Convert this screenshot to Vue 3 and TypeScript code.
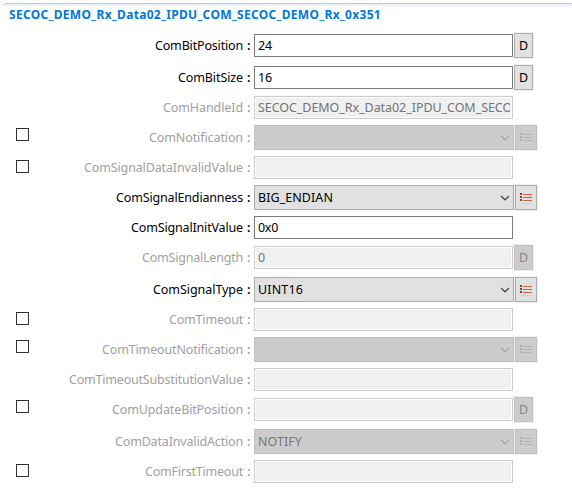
<script setup lang="ts">
type Kind = 'text' | 'combo'

interface Field {
  name: string
  labelWidth: number
  kind: Kind
  value?: string
  valueWidth?: number
  enabled?: boolean
  optional?: boolean
  resettable?: boolean
}

const title = 'SECOC_DEMO_Rx_Data02_IPDU_COM_SECOC_DEMO_Rx_0x351'

const fields: Field[] = [
  { name: 'ComBitPosition', labelWidth: 88, kind: 'text', value: '24', valueWidth: 14, enabled: true, resettable: true },
  { name: 'ComBitSize', labelWidth: 65, kind: 'text', value: '16', valueWidth: 14, enabled: true, resettable: true },
  { name: 'ComHandleId', labelWidth: 80, kind: 'text', value: 'SECOC_DEMO_Rx_Data02_IPDU_COM_SECOC', valueWidth: 262 },
  { name: 'ComNotification', labelWidth: 94, kind: 'combo', optional: true },
  { name: 'ComSignalDataInvalidValue', labelWidth: 159, kind: 'text', optional: true },
  { name: 'ComSignalEndianness', labelWidth: 127, kind: 'combo', value: 'BIG_ENDIAN', valueWidth: 75, enabled: true },
  { name: 'ComSignalInitValue', labelWidth: 112, kind: 'text', value: '0x0', valueWidth: 20, enabled: true },
  { name: 'ComSignalLength', labelWidth: 101, kind: 'text', value: '0', valueWidth: 7, resettable: true },
  { name: 'ComSignalType', labelWidth: 90, kind: 'combo', value: 'UINT16', valueWidth: 45, enabled: true },
  { name: 'ComTimeout', labelWidth: 74, kind: 'text', optional: true },
  { name: 'ComTimeoutNotification', labelWidth: 141, kind: 'combo', optional: true },
  { name: 'ComTimeoutSubstitutionValue', labelWidth: 174, kind: 'text' },
  { name: 'ComUpdateBitPosition', labelWidth: 131, kind: 'text', optional: true, resettable: true },
  { name: 'ComDataInvalidAction', labelWidth: 128, kind: 'combo', value: 'NOTIFY', valueWidth: 44 },
  { name: 'ComFirstTimeout', labelWidth: 98, kind: 'text', optional: true },
]

// Adjusts tracking so that a text run takes the given width in pixels.
const vFit = {
  mounted(el: HTMLElement, binding: { value?: number }) {
    const count = el.textContent?.length ?? 0
    if (!binding.value || !count) return
    const natural = el.getBoundingClientRect().width
    el.style.letterSpacing = `${(binding.value - natural) / count}px`
  },
}
</script>

<template>
  <section class="panel">
    <header class="heading">
      <h1 class="title"><span v-fit="372">{{ title }}</span></h1>
    </header>
    <div class="form">
      <div
        v-for="f in fields"
        :key="f.name"
        class="row"
        :class="{ tall: f.kind === 'combo' || f.resettable, off: !f.enabled }"
      >
        <div class="check-cell"><span v-if="f.optional" class="check"></span></div>
        <div class="label">
          <span v-fit="f.labelWidth">{{ f.name }}</span><span class="colon">:</span>
        </div>
        <div class="field" :class="f.kind">
          <div class="clip"><span v-if="f.value" v-fit="f.valueWidth" class="value">{{ f.value }}</span></div>
          <svg v-if="f.kind === 'combo'" class="chevron" width="10" height="6" viewBox="0 0 10 6">
            <path d="M1 1L5 4.8L9 1" />
          </svg>
        </div>
        <div v-if="f.kind === 'combo'" class="button list">
          <svg width="20" height="23" viewBox="0 0 20 23" shape-rendering="crispEdges">
            <path class="dots" d="M4 7h2v2h-2zM4 10h2v2h-2zM4 13h2v2h-2z" />
            <path class="lines" d="M7 8h9v1h-9zM7 11h9v1h-9zM7 14h9v1h-9z" />
            <path class="shade" d="M5 17h12v1h-12z" />
          </svg>
        </div>
        <div v-else-if="f.resettable" class="button reset">D</div>
      </div>
    </div>
  </section>
</template>

<style>
body {
  margin: 0;
  background: #fff;
}
</style>

<style scoped>
.panel {
  box-sizing: border-box;
  width: 572px;
  height: 488px;
  padding: 3px 0 0 3px;
  overflow: hidden;
  background: #fff;
  color: #000;
  font: 12.5px/20px 'Noto Sans', 'Open Sans', sans-serif;
  white-space: nowrap;
}
.heading {
  box-sizing: border-box;
  display: flex;
  align-items: flex-start;
  height: 29px;
  padding: 2px 0 0 5px;
  border-top: 1px solid #b5c7e5;
  border-top-left-radius: 4px;
  background: linear-gradient(#eaf0f8, #fff 5px);
}
.title {
  margin: 0;
  padding: 0 1px;
  background: #fff;
  color: #0078d7;
  font-size: 12px;
  font-weight: 700;
  line-height: 17px;
}
.title span {
  display: block;
}
.form {
  display: flex;
  flex-direction: column;
  gap: 5px;
}
.row {
  display: flex;
  align-items: center;
  height: 23px;
}
.tall {
  height: 27px;
}
.check-cell {
  box-sizing: border-box;
  align-self: flex-start;
  flex: none;
  width: 27px;
  padding: 4px 0 0 13px;
}
.check {
  display: block;
  box-sizing: border-box;
  width: 13px;
  height: 13px;
  border: 1px solid #333;
}
.label {
  display: flex;
  justify-content: flex-end;
  flex: none;
  width: 224px;
}
.colon {
  width: 3px;
  margin: 0 4px 0 4px;
  font-weight: 600;
}
.off .label {
  color: #a0a0a0;
}
.field {
  box-sizing: border-box;
  display: flex;
  align-items: center;
  flex: none;
  width: 259px;
  height: 23px;
  padding: 0 2px 0 3px;
  border: 1px solid #7a7a7a;
}
.clip {
  flex: 1;
  min-width: 0;
  height: 20px;
  overflow: hidden;
}
.value {
  display: inline-block;
}
.off .field {
  border-color: #ccc;
  background: #f0f0f0;
  box-shadow: inset 0 0 0 1px #fff;
  color: #737373;
}
.field.combo {
  width: 260px;
  height: 25px;
  padding-right: 3px;
  border-color: #adadad;
  background: #e1e1e1;
}
.off .field.combo {
  border-color: #bfbfbf;
  background: #ccc;
  box-shadow: none;
  color: #777;
}
.chevron {
  flex: none;
  fill: none;
  stroke: #444;
  stroke-width: 1.2;
}
.off .chevron {
  stroke: #a5a5a5;
}
.button {
  box-sizing: border-box;
  flex: none;
  height: 25px;
  margin-left: 1px;
  border: 1px solid #adadad;
  background: #e1e1e1;
  box-shadow: 0 0 0 1px #f0f0f0;
}
.off .button {
  border-color: #bfbfbf;
  background: #ccc;
  color: #838383;
}
.reset {
  width: 19px;
  line-height: 23px;
  text-align: center;
  clip-path: inset(-1px -1px -1px 0);
}
.list {
  width: 22px;
}
.list svg {
  display: block;
}
.dots {
  fill: #87402d;
}
.lines {
  fill: #cf6349;
}
.shade {
  fill: #d2d2d2;
}
.off .dots {
  fill: #aeaeae;
}
.off .lines {
  fill: #b3b3b3;
}
.off .shade {
  fill: #d3d3d3;
}
</style>
